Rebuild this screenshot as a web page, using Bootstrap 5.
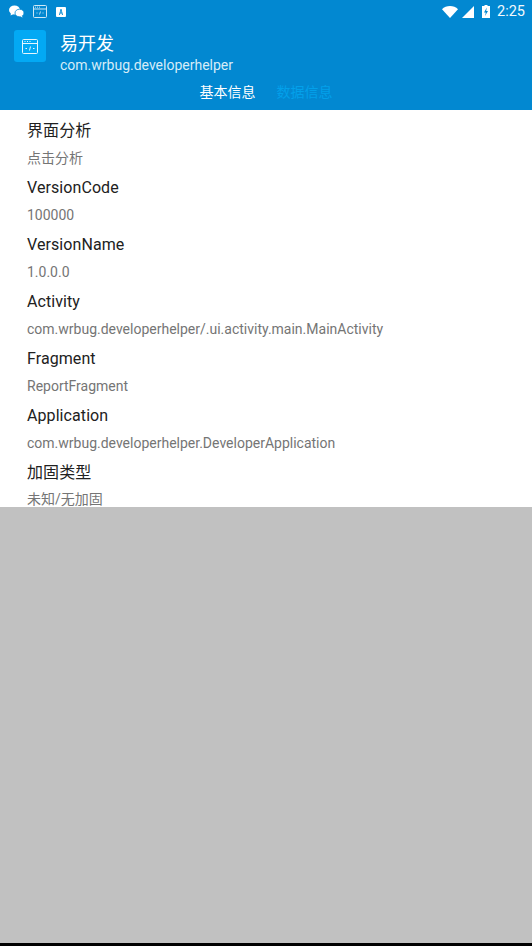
<!DOCTYPE html>
<html lang="zh">
<head>
<meta charset="utf-8">
<title>易开发</title>
<link rel="stylesheet" href="https://cdn.jsdelivr.net/npm/bootstrap@5.3.0/dist/css/bootstrap.min.css">
<style>
html,body{height:946px;overflow:hidden;background:#c1c1c1;font-family:Roboto,"Noto Sans CJK SC",sans-serif}
.app-frame{height:946px}
.app-head{height:110px;background:#0288d1;color:#fff}
.status-row{height:23px;padding:0 7px 0 9px}
.status-time{font-size:14.5px;line-height:23px;margin-left:7px;color:#f2f9fd}
.status-left{gap:9px}
.title-row{padding:7px 14px 0}
.app-tile{width:32px;height:32px;background:#03a9f4;border-radius:3px}
.app-text{margin-left:14px}
.app-name{font-size:18px;line-height:23px;margin-top:2px}
.app-pkg{font-size:14px;line-height:20px;color:#d5ecf8}
.tab-row{gap:21px;font-size:14px;line-height:20px;margin-top:7px}
.tab-off{color:#03a0ea}
.info-pane{height:397px;background:#fff;overflow:hidden;padding:7px 27px 0}
.info-key{font-size:16px;line-height:28px;height:28px;color:#212121;letter-spacing:.08px}
.info-val{font-size:14px;line-height:27px;height:29px;color:#757575}
.info-val-last{line-height:25px}
.grey-fill{height:436px;background:#c1c1c1}
.nav-edge{height:3px;background:#000}
</style>
</head>
<body>
<div class="app-frame d-flex flex-column">
  <header class="app-head">
    <div class="status-row d-flex align-items-center justify-content-between">
      <div class="status-left d-flex align-items-center">
        <svg width="15" height="13" viewBox="0 0 15 13" aria-hidden="true"><ellipse cx="5.500" cy="5" rx="5.500" ry="4.600" fill="#fff"/><path d="M2 8l-.4 2.400L4.500 9z" fill="#fff"/><ellipse cx="10.500" cy="8" rx="4.500" ry="3.800" fill="#fff" stroke="#0288d1" stroke-width=".8"/><path d="M13 11l.6 1.600L11 11.400z" fill="#fff"/></svg>
        <svg width="14" height="13" viewBox="0 0 14 13" fill="none" stroke="#cfe8f6" aria-hidden="true"><rect x=".5" y=".5" width="13" height="12" rx="1"/><path d="M.5 4h13"/><path d="M2 2.200h1M4 2.200h1M6 2.200h1M3.500 8h1M9.500 8h1M7.500 6.500l-1 3" stroke-width=".9"/></svg>
        <svg width="10" height="10" viewBox="0 0 10 10" aria-hidden="true"><rect width="10" height="10" rx="1" fill="#fff"/><path d="M3 8l1.500-6h1L7 8H6l-.3-1.400H4.300L4 8zM4.500 5.600h1L5 3.400z" fill="#0288d1"/></svg>
      </div>
      <div class="d-flex align-items-center">
        <svg width="16" height="12" viewBox="0 0 16 12" class="me-1" aria-hidden="true"><path d="M0 3.200C2 1.200 5 0 8 0s6 1.200 8 3.200L8 12z" fill="#fff"/></svg>
        <svg width="12" height="12" viewBox="0 0 12 12" class="me-2" aria-hidden="true"><path d="M12 0v12H0z" fill="#fff"/></svg>
        <svg width="8" height="13" viewBox="0 0 8 13" aria-hidden="true"><path d="M2.500 0h3v1H8v12H0V1h2.500z" fill="#fff"/><path d="M4.800 2.500L2 7.500h1.800L3 11l3-5H4.200z" fill="#0288d1"/></svg>
        <span class="status-time">2:25</span>
      </div>
    </div>
    <div class="title-row d-flex">
      <div class="app-tile d-flex align-items-center justify-content-center">
        <svg width="16" height="15" viewBox="0 0 16 15" fill="none" stroke="#e6f6fe" aria-hidden="true"><rect x=".5" y=".5" width="15" height="14" rx="1"/><path d="M.5 4.500h15"/><path d="M2.500 2.500h1M5 2.500h1M7.500 2.500h1M3.500 9.500h1.500M11 9.500h1.500M8.500 7.500l-1 4"/></svg>
      </div>
      <div class="app-text">
        <div class="app-name">易开发</div>
        <div class="app-pkg">com.wrbug.developerhelper</div>
      </div>
    </div>
    <div class="tab-row d-flex justify-content-center">
      <span>基本信息</span>
      <span class="tab-off">数据信息</span>
    </div>
  </header>
  <main class="info-pane">
    <div class="info-key">界面分析</div>
    <div class="info-val">点击分析</div>
    <div class="info-key">VersionCode</div>
    <div class="info-val">100000</div>
    <div class="info-key">VersionName</div>
    <div class="info-val">1.0.0.0</div>
    <div class="info-key">Activity</div>
    <div class="info-val">com.wrbug.developerhelper/.ui.activity.main.MainActivity</div>
    <div class="info-key">Fragment</div>
    <div class="info-val">ReportFragment</div>
    <div class="info-key">Application</div>
    <div class="info-val">com.wrbug.developerhelper.DeveloperApplication</div>
    <div class="info-key">加固类型</div>
    <div class="info-val info-val-last">未知/无加固</div>
  </main>
  <div class="grey-fill"></div>
  <div class="nav-edge"></div>
</div>
<script src="https://cdn.jsdelivr.net/npm/bootstrap@5.3.0/dist/js/bootstrap.bundle.min.js"></script>
</body>
</html>
